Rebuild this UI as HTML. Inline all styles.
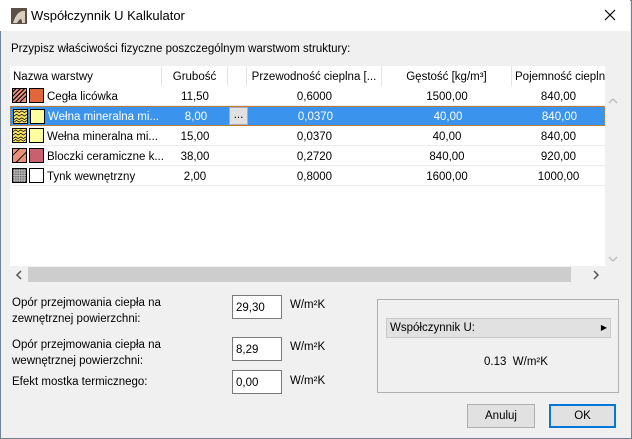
<!DOCTYPE html>
<html><head><meta charset="utf-8"><style>
*{margin:0;padding:0;box-sizing:border-box}
body{width:632px;height:439px;overflow:hidden;background:#f0f0f0;font-family:"Liberation Sans",sans-serif;font-size:11.5px;color:#000;position:relative}
.win{position:absolute;left:0;top:0;width:632px;height:439px;border:1px solid #6f8296}
.title{position:absolute;left:0;top:0;width:630px;height:31px;background:#fff}
.abs{position:absolute;white-space:nowrap}
.tbl{position:absolute;left:10px;top:66px;width:595px;height:200px;background:#fff;overflow:hidden}
.hdr{position:absolute;top:0;height:20px;line-height:22px;border-right:1px solid #e5e5e5;white-space:nowrap;overflow:hidden}
.row{position:absolute;left:0;width:595px;height:20px;line-height:22px;border-bottom:1px solid #ececec}
.c{position:absolute;top:0;text-align:center}
.sel{background:#3a94ed;color:#fff;border:1px dotted #c08040;line-height:20px}
.pat{position:absolute;left:2px;top:2px;width:15px;height:15px;border:1px solid #000}
.col{position:absolute;left:19px;top:2px;width:15px;height:15px;border:1px solid #000}
.inp{position:absolute;left:232px;width:50px;height:24px;background:#fff;border:1px solid #7a7a7a;line-height:24px;padding-left:3px}
.btn{position:absolute;top:404px;height:24px;background:#e1e1e1;border:1px solid #adadad;text-align:center;line-height:22px}
</style></head><body>
<div class="win"></div>
<div class="title"></div>
<svg class="abs" style="left:11px;top:8px" width="16" height="16"><rect width="16" height="16" fill="#5a5048"/><path d="M2 15 Q6 2 14 3 L14 15 L11 15 Q11 7 6 15Z" fill="#d8cfc0"/></svg>
<div class="abs" style="left:31px;top:8px;font-size:13px">Współczynnik U Kalkulator</div>
<svg class="abs" style="left:604px;top:9px" width="12" height="12"><path d="M1 1L11 11M11 1L1 11" stroke="#000" stroke-width="1.2"/></svg>
<div class="abs" style="left:11px;top:43px">Przypisz właściwości fizyczne poszczególnym warstwom struktury:</div>
<div class="tbl">
<div class="hdr" style="left:0;width:152px;padding-left:3px">Nazwa warstwy</div>
<div class="hdr" style="left:152px;width:66px;text-align:center">Grubość</div>
<div class="hdr" style="left:218px;width:19px"></div>
<div class="hdr" style="left:237px;width:135px;text-align:center">Przewodność cieplna [...</div>
<div class="hdr" style="left:372px;width:130px;text-align:center">Gęstość [kg/m³]</div>
<div class="hdr" style="left:502px;width:93px;padding-left:3px;border:none">Pojemność cieplna</div>

<div class="row" style="top:20px"><svg class="pat" viewBox="0 0 15 15"><rect width="15" height="15" fill="#e8907a"/><path d="M-2 5L5 -2M-2 10L10 -2M-2 15L15 -2M3 15L15 3M8 15L15 8" stroke="#000" stroke-width="1.3"/></svg><div class="col" style="background:#e0663c"></div><span class="abs" style="left:37px">Cegła licówka</span><div class="c" style="left:152px;width:66px">11,50</div><div class="c" style="left:237px;width:135px">0,6000</div><div class="c" style="left:372px;width:130px">1500,00</div><div class="c" style="left:502px;width:93px">840,00</div></div>
<div class="row sel" style="top:40px"><svg class="pat" viewBox="0 0 15 15"><rect width="15" height="15" fill="#f5e060"/><path d="M0 3L3 1L6 3L9 1L12 3L15 1M0 7L3 5L6 7L9 5L12 7L15 5M0 11L3 9L6 11L9 9L12 11L15 9M0 14L3 12L6 14L9 12L12 14L15 12" stroke="#000" fill="none" stroke-width=".8"/></svg><div class="col" style="background:#ffffa0"></div><span class="abs" style="left:37px">Wełna mineralna mi...</span><div class="c" style="left:152px;width:66px">8,00</div><div class="c" style="left:218px;top:0;width:19px;height:18px;background:#e1e1e1;border:1px solid #adadad;color:#000;line-height:14px">...</div><div class="c" style="left:237px;width:135px">0,0370</div><div class="c" style="left:372px;width:130px">40,00</div><div class="c" style="left:502px;width:93px">840,00</div></div>
<div class="row" style="top:60px"><svg class="pat" viewBox="0 0 15 15"><rect width="15" height="15" fill="#f5e060"/><path d="M0 3L3 1L6 3L9 1L12 3L15 1M0 7L3 5L6 7L9 5L12 7L15 5M0 11L3 9L6 11L9 9L12 11L15 9M0 14L3 12L6 14L9 12L12 14L15 12" stroke="#000" fill="none" stroke-width=".8"/></svg><div class="col" style="background:#ffffa0"></div><span class="abs" style="left:37px">Wełna mineralna mi...</span><div class="c" style="left:152px;width:66px">15,00</div><div class="c" style="left:237px;width:135px">0,0370</div><div class="c" style="left:372px;width:130px">40,00</div><div class="c" style="left:502px;width:93px">840,00</div></div>
<div class="row" style="top:80px"><svg class="pat" viewBox="0 0 15 15"><rect width="15" height="15" fill="#e8907a"/><path d="M-2 9L9 -2M2 17L17 2" stroke="#000" stroke-width="1"/></svg><div class="col" style="background:#c86070"></div><span class="abs" style="left:37px">Bloczki ceramiczne k...</span><div class="c" style="left:152px;width:66px">38,00</div><div class="c" style="left:237px;width:135px">0,2720</div><div class="c" style="left:372px;width:130px">840,00</div><div class="c" style="left:502px;width:93px">920,00</div></div>
<div class="row" style="top:100px"><svg class="pat" viewBox="0 0 15 15"><defs><pattern id="d" width="2" height="2" patternUnits="userSpaceOnUse"><rect width="2" height="2" fill="#bbb"/><rect width="1" height="1" fill="#333"/></pattern></defs><rect width="15" height="15" fill="url(#d)"/></svg><div class="col" style="background:#fff"></div><span class="abs" style="left:37px">Tynk wewnętrzny</span><div class="c" style="left:152px;width:66px">2,00</div><div class="c" style="left:237px;width:135px">0,8000</div><div class="c" style="left:372px;width:130px">1600,00</div><div class="c" style="left:502px;width:93px">1000,00</div></div>
</div>
<svg class="abs" style="left:608px;top:97px" width="10" height="8"><path d="M1 6L5 2L9 6" stroke="#bbb" fill="none" stroke-width="1.3"/></svg>
<svg class="abs" style="left:608px;top:255px" width="10" height="8"><path d="M1 2L5 6L9 2" stroke="#bbb" fill="none" stroke-width="1.3"/></svg>
<div class="abs" style="left:28px;top:267px;width:543px;height:15px;background:#cdcdcd"></div>
<svg class="abs" style="left:15px;top:270px" width="8" height="10"><path d="M6 1L2 5L6 9" stroke="#555" fill="none" stroke-width="1.5"/></svg>
<svg class="abs" style="left:592px;top:270px" width="8" height="10"><path d="M2 1L6 5L2 9" stroke="#555" fill="none" stroke-width="1.5"/></svg>

<div class="abs" style="left:12px;top:295px;line-height:16px">Opór przejmowania ciepła na<br>zewnętrznej powierzchni:</div>
<div class="abs" style="left:12px;top:337px;line-height:16px">Opór przejmowania ciepła na<br>wewnętrznej powierzchni:</div>
<div class="abs" style="left:12px;top:376px">Efekt mostka termicznego:</div>
<div class="inp" style="top:295px">29,30</div>
<div class="inp" style="top:337px">8,29</div>
<div class="inp" style="top:370px">0,00</div>
<div class="abs" style="left:290px;top:299px">W/m²K</div>
<div class="abs" style="left:290px;top:341px">W/m²K</div>
<div class="abs" style="left:290px;top:375px">W/m²K</div>
<div class="abs" style="left:377px;top:299px;width:242px;height:94px;border:1px solid #b0b0b0"></div>
<div class="abs" style="left:386px;top:318px;width:225px;height:20px;background:#e1e1e1;border:1px solid #c8c8c8;line-height:18px;padding-left:3px">Współczynnik U:<span style="position:absolute;right:3px;font-size:8px">▶</span></div>
<div class="abs" style="left:484px;top:356px">0.13&nbsp; W/m²K</div>
<div class="btn" style="left:467px;width:68px">Anuluj</div>
<div class="btn" style="left:549px;width:67px;border:2px solid #0078d7;line-height:20px">OK</div>
</body></html>
